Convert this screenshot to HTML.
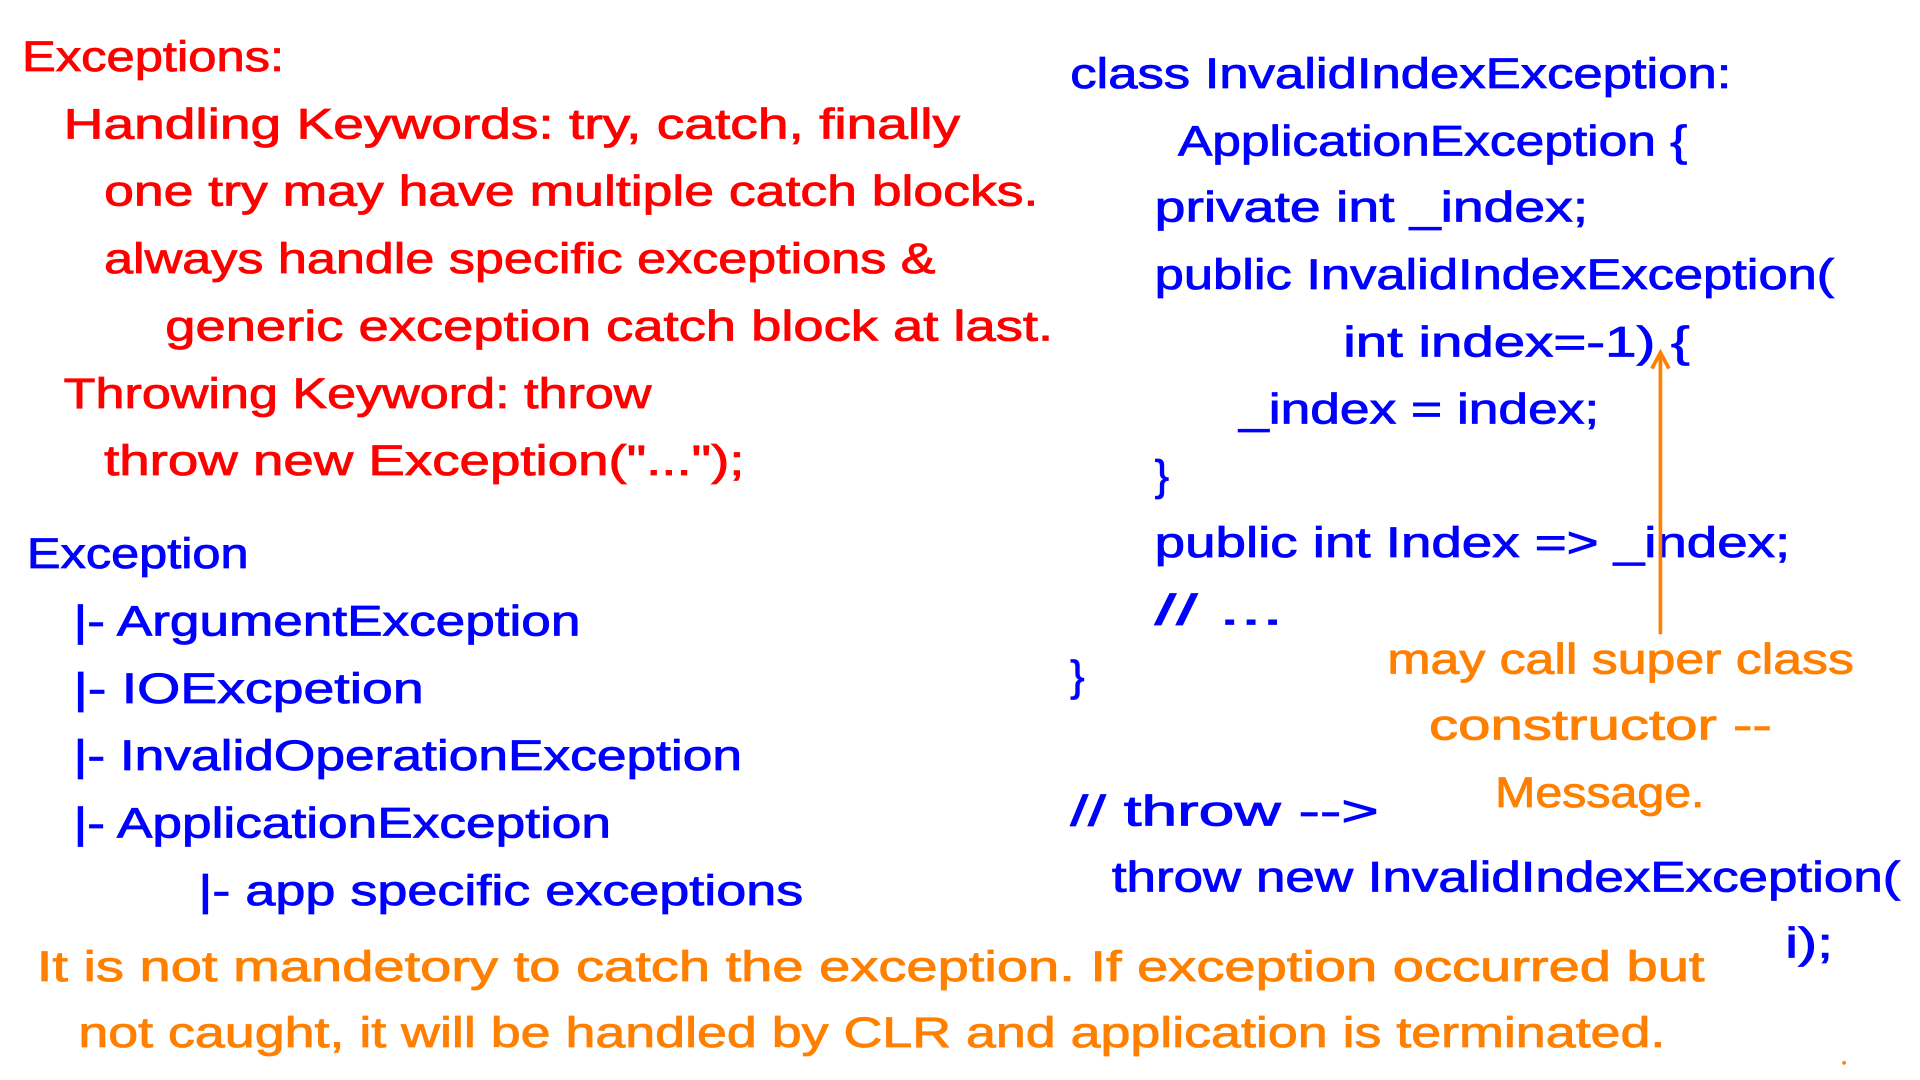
<!DOCTYPE html>
<html><head><meta charset="utf-8"><style>
html,body{margin:0;padding:0;background:#fff;}
svg{display:block}
text{font-family:"Liberation Sans",sans-serif;font-size:35px;stroke-width:0.7px;}
.r{fill:#ff0000;stroke:#ff0000}.b{fill:#0000ff;stroke:#0000ff}.o{fill:#ff8000;stroke:#ff8000}
</style></head><body>
<svg width="1920" height="1080" viewBox="0 0 1568 882" xmlns="http://www.w3.org/2000/svg">
<rect width="1568" height="882" fill="#fff"/>
<g transform="translate(0,-2)">
<text class="r" x="18" y="60" textLength="214" lengthAdjust="spacingAndGlyphs">Exceptions:</text>
<text class="r" x="52" y="115" textLength="732" lengthAdjust="spacingAndGlyphs">Handling Keywords: try, catch, finally</text>
<text class="r" x="85" y="170" textLength="763" lengthAdjust="spacingAndGlyphs">one try may have multiple catch blocks.</text>
<text class="r" x="85" y="225" textLength="679" lengthAdjust="spacingAndGlyphs">always handle specific exceptions &amp;</text>
<text class="r" x="135" y="280" textLength="725" lengthAdjust="spacingAndGlyphs">generic exception catch block at last.</text>
<text class="r" x="52" y="335" textLength="480" lengthAdjust="spacingAndGlyphs">Throwing Keyword: throw</text>
<text class="r" x="85" y="390" textLength="523" lengthAdjust="spacingAndGlyphs">throw new Exception("...");</text>
<text class="b" x="22" y="466" textLength="181" lengthAdjust="spacingAndGlyphs">Exception</text>
<text class="b" x="60" y="521" textLength="414" lengthAdjust="spacingAndGlyphs">|- ArgumentException</text>
<text class="b" x="60" y="576" textLength="286" lengthAdjust="spacingAndGlyphs">|- IOExcpetion</text>
<text class="b" x="60" y="631" textLength="546" lengthAdjust="spacingAndGlyphs">|- InvalidOperationException</text>
<text class="b" x="60" y="686" textLength="439" lengthAdjust="spacingAndGlyphs">|- ApplicationException</text>
<text class="b" x="162" y="741" textLength="494" lengthAdjust="spacingAndGlyphs">|- app specific exceptions</text>
<text class="o" x="30" y="803" textLength="1362" lengthAdjust="spacingAndGlyphs">It is not mandetory to catch the exception. If exception occurred but</text>
<text class="o" x="64" y="857" textLength="1296" lengthAdjust="spacingAndGlyphs">not caught, it will be handled by CLR and application is terminated.</text>
<text class="b" x="874" y="74" textLength="540" lengthAdjust="spacingAndGlyphs">class InvalidIndexException:</text>
<text class="b" x="962" y="129" textLength="416" lengthAdjust="spacingAndGlyphs">ApplicationException {</text>
<text class="b" x="943" y="183" textLength="354" lengthAdjust="spacingAndGlyphs">private int _index;</text>
<text class="b" x="943" y="238" textLength="555" lengthAdjust="spacingAndGlyphs">public InvalidIndexException(</text>
<text class="b" x="1097" y="293" textLength="283" lengthAdjust="spacingAndGlyphs">int index=-1) {</text>
<text class="b" x="1012" y="348" textLength="294" lengthAdjust="spacingAndGlyphs">_index = index;</text>
<text class="b" x="943" y="402">}</text>
<text class="b" x="943" y="457" textLength="519" lengthAdjust="spacingAndGlyphs">public int Index =&gt; _index;</text>
<text class="b" x="943" y="512" textLength="105" lengthAdjust="spacingAndGlyphs">// ...</text>
<text class="b" x="874" y="566">}</text>
<text class="b" x="874" y="676" textLength="252" lengthAdjust="spacingAndGlyphs">// throw --&gt;</text>
<text class="b" x="908" y="730" textLength="644" lengthAdjust="spacingAndGlyphs">throw new InvalidIndexException(</text>
<text class="b" x="1458" y="784" textLength="39" lengthAdjust="spacingAndGlyphs">i);</text>
<text class="o" x="1133" y="552" textLength="381" lengthAdjust="spacingAndGlyphs">may call super class</text>
<text class="o" x="1167" y="606" textLength="280" lengthAdjust="spacingAndGlyphs">constructor --</text>
<text class="o" x="1221" y="661" textLength="171" lengthAdjust="spacingAndGlyphs">Message.</text>
</g>
<path d="M1356 518 L1356 290 M1349 301 L1356 288 L1363 301" stroke="#ff8000" stroke-width="3" fill="none"/>
<circle cx="1506" cy="868" r="1.5" fill="#ff8000"/>
</svg>
</body></html>
